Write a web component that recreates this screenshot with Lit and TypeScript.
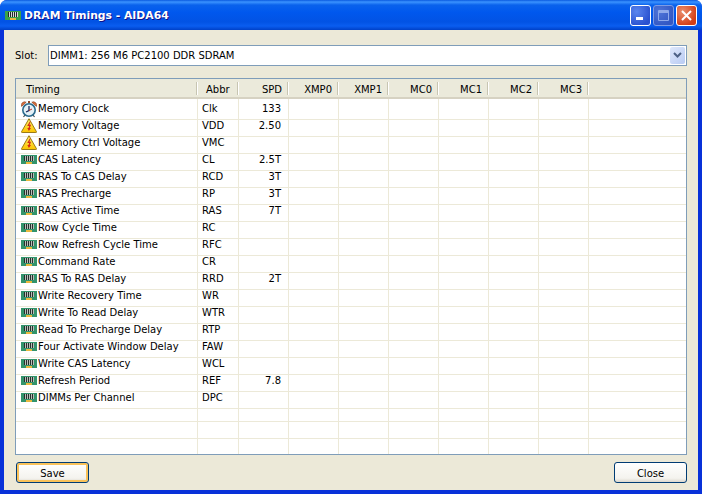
import { LitElement, html, css, svg } from 'lit';
import { customElement } from 'lit/decorators.js';

const ROWS: [string, string, string, string][] = [
    ['clock', 'Memory Clock', 'Clk', '133'],
    ['warn', 'Memory Voltage', 'VDD', '2.50'],
    ['warn', 'Memory Ctrl Voltage', 'VMC', ''],
    ['ram', 'CAS Latency', 'CL', '2.5T'],
    ['ram', 'RAS To CAS Delay', 'RCD', '3T'],
    ['ram', 'RAS Precharge', 'RP', '3T'],
    ['ram', 'RAS Active Time', 'RAS', '7T'],
    ['ram', 'Row Cycle Time', 'RC', ''],
    ['ram', 'Row Refresh Cycle Time', 'RFC', ''],
    ['ram', 'Command Rate', 'CR', ''],
    ['ram', 'RAS To RAS Delay', 'RRD', '2T'],
    ['ram', 'Write Recovery Time', 'WR', ''],
    ['ram', 'Write To Read Delay', 'WTR', ''],
    ['ram', 'Read To Precharge Delay', 'RTP', ''],
    ['ram', 'Four Activate Window Delay', 'FAW', ''],
    ['ram', 'Write CAS Latency', 'WCL', ''],
    ['ram', 'Refresh Period', 'REF', '7.8'],
    ['ram', 'DIMMs Per Channel', 'DPC', ''],
    ['', '', '', ''],
    ['', '', '', ''],
    ['', '', '', ''],
];

const XMP = ['XMP0', 'XMP1', 'MC0', 'MC1', 'MC2', 'MC3'];

const ramIcon = svg`<svg width="16" height="9" viewBox="0 0 16 9" shape-rendering="crispEdges">
    <rect width="16" height="9" fill="#33946c"/>
    <path d="M3 1h1v5H3zM5 1h1v5H5zM7 1h1v5H7zM9 1h1v5H9zM11 1h1v5h-1z" fill="#26302c"/>
    <path d="M4 1h1v5H4zM6 1h1v5H6zM8 1h1v5H8zM10 1h1v5h-1zM12 1h1v5h-1z" fill="#b8bdb8"/>
    <path d="M5 7h6v2H5z" fill="#e9b93e"/>
</svg>`;

const titleRamIcon = svg`<svg width="16" height="9" viewBox="0 0 16 9" shape-rendering="crispEdges">
    <rect width="16" height="9" fill="#3aa24a"/>
    <path d="M3 1h1v5H3zM5 1h1v5H5zM7 1h1v5H7zM9 1h1v5H9zM11 1h1v5h-1z" fill="#20282a"/>
    <path d="M4 1h1v5H4zM6 1h1v5H6zM8 1h1v5H8zM10 1h1v5h-1zM12 1h1v5h-1z" fill="#d8dcd8"/>
    <path d="M5 7h6v2H5z" fill="#e9b93e"/>
</svg>`;

const warnIcon = svg`<svg width="16" height="15" viewBox="0 0 16 15">
    <defs><linearGradient id="wg" x1="0" y1="0" x2="0" y2="1"><stop offset="0" stop-color="#fff06a"/><stop offset="1" stop-color="#fbc400"/></linearGradient></defs>
    <path d="M8 .7 15.400 13.600a.6.6 0 0 1-.5.9H1.100a.6.6 0 0 1-.5-.9Z" fill="url(#wg)" stroke="#9c7a14" stroke-linejoin="round"/>
    <path d="M8.800 3.500 6.200 8h2l-.7 2H6.300l1.600 3 2.100-3H8.800l1.300-3.200H8.400l1.200-3.300z" fill="#d5281a"/>
</svg>`;

const clockIcon = svg`<svg width="16" height="18" viewBox="0 0 16 18">
    <path d="M7 1h2v2H7z" fill="#8a4a2a"/>
    <path d="M.6 6.400a3.300 3.300 0 0 1 4.600-4.200zM15.400 6.400a3.300 3.300 0 0 0-4.600-4.200z" fill="#e0703c" stroke="#7a3a20" stroke-width=".6"/>
    <path d="M2.500 17l1.500-2M13.500 17l-1.500-2" stroke="#4a4a4a" stroke-width="1.200"/>
    <circle cx="8" cy="10" r="6.200" fill="#e4f0f6" stroke="#2a6a8c" stroke-width="1.600"/>
    <path d="M8 6v4.500L5 12" fill="none" stroke="#1a2a5c" stroke-width="1.300"/>
    <path d="M8 10.500l3-1.500" fill="none" stroke="#c8301c"/>
</svg>`;

const icons: Record<string, unknown> = { ram: ramIcon, warn: warnIcon, clock: clockIcon };

@customElement('app-root')
export class AppRoot extends LitElement {
    static styles = css`
        :host {
            display: block;
            width: 702px;
            height: 494px;
            font-family: Tahoma, 'DejaVu Sans', sans-serif;
            font-size: 10px;
            color: #000;
            background: #fff;
        }

        .window {
            height: 100%;
            box-sizing: border-box;
            display: flex;
            flex-direction: column;
            background: #0831d9;
            border-radius: 7px 7px 0 0;
            overflow: hidden;
        }

        .titlebar {
            height: 30px;
            flex: none;
            display: flex;
            align-items: center;
            padding: 0 5px 0 5px;
            background: linear-gradient(180deg, #0a5ae0 0, #3b93ff 2px, #0a62ec 5px, #0058ee 12px, #0253e4 22px, #0a5df0 26px, #0041c8 30px);
        }

        .title-text {
            margin-left: 3px;
            color: #fff;
            font-weight: bold;
            font-size: 10.8px;
            text-shadow: 1px 1px 0 #0f1089;
            flex: 1;
        }

        .cap-btn {
            width: 21px;
            height: 21px;
            box-sizing: border-box;
            margin-left: 2px;
            border: 1px solid #fff;
            border-radius: 3px;
            display: flex;
            align-items: center;
            justify-content: center;
            background: radial-gradient(circle at 30% 30%, #5a86ee, #2a52d0 75%);
        }

        .cap-btn.disabled {
            border-color: #7d9be4;
            background: radial-gradient(circle at 30% 30%, #4f74d8, #3358c4 75%);
        }

        .cap-btn.close {
            background: radial-gradient(circle at 30% 30%, #eb8f6e, #d23e16 75%);
        }

        .client {
            flex: 1;
            min-height: 0;
            margin: 0 4px 4px;
            padding: 15px 11px 7px;
            background: #ece9d8;
            display: flex;
            flex-direction: column;
        }

        .slot {
            display: flex;
            align-items: center;
            height: 21px;
            flex: none;
            line-height: 23px;
        }

        .slot label {
            width: 33px;
        }

        .combo {
            flex: 1;
            height: 21px;
            box-sizing: border-box;
            border: 1px solid #7f9db9;
            background: #fff;
            display: flex;
            align-items: center;
            justify-content: space-between;
            padding: 0 1px 0 1px;
        }

        .combo-btn {
            width: 15px;
            height: 17px;
            border-radius: 2px;
            background: linear-gradient(135deg, #dfe8fb, #b9cbf3);
            display: flex;
            align-items: center;
            justify-content: center;
        }

        .list {
            flex: 1;
            min-height: 0;
            margin-top: 12px;
            border: 1px solid #7f9db9;
            background: #fff;
            overflow: hidden;
        }

        .row {
            display: grid;
            grid-template-columns: 182px 41px repeat(7, 50px) 1fr;
            height: 17px;
        }

        .row > div {
            box-sizing: border-box;
            border-right: 1px solid #ece9d8;
            border-bottom: 1px solid #ece9d8;
            line-height: 16px;
            padding: 2px 4px 0;
            white-space: nowrap;
            overflow: hidden;
        }

        .row > div.last {
            border-right: none;
        }

        .row .num {
            text-align: right;
            padding-right: 7px;
        }

        .row .name {
            display: flex;
            align-items: center;
            padding: 0 0 0 5px;
            overflow: visible;
            line-height: 20px;
        }

        .row .name .ico {
            width: 16px;
            height: 16px;
            margin-right: 1px;
            margin-top: -1px;
            display: flex;
            align-items: center;
            flex: none;
        }

        .head {
            height: 20px;
            display: grid;
            grid-template-columns: 182px 41px repeat(7, 50px) 1fr;
            background: #ebeadb;
            border-bottom: 2px solid #d6d2c2;
            box-sizing: border-box;
        }

        .head > div {
            position: relative;
            line-height: 22px;
            padding: 0 8px;
        }

        .head > div.first {
            padding-left: 10px;
        }

        .head > div.sep::after {
            content: '';
            position: absolute;
            right: 1px;
            top: 3px;
            height: 13px;
            border-right: 1px solid #c7c5b2;
            box-shadow: 1px 0 0 #fff;
        }

        .head .num {
            text-align: right;
            padding-right: 7px;
        }

        .footer {
            flex: none;
            display: flex;
            justify-content: space-between;
            margin-top: 7px;
            padding-left: 1px;
        }

        .btn {
            width: 73px;
            height: 21px;
            box-sizing: border-box;
            border: 1px solid #003c74;
            border-radius: 3px;
            background: linear-gradient(180deg, #fff, #f4f3ee 80%, #dcd8ce);
            font: inherit;
            color: #000;
            padding: 1px 0 0;
        }

        .btn.default {
            box-shadow: inset 0 0 0 2px #f9c25a;
        }
    `;

    render() {
        return html`
            <div class="window">
                <div class="titlebar">
                    ${titleRamIcon}
                    <span class="title-text">DRAM Timings - AIDA64</span>
                    <div class="cap-btn">
                        <svg width="11" height="11" viewBox="0 0 11 11"><path d="M1 7h7v3H1z" fill="#fff"/></svg>
                    </div>
                    <div class="cap-btn disabled">
                        <svg width="13" height="13" viewBox="0 0 13 13"><path d="M1.500 1.500h10v10h-10z" fill="none" stroke="#8fa9ea" stroke-width="1"/><path d="M1 2h11v2H1z" fill="#8fa9ea"/></svg>
                    </div>
                    <div class="cap-btn close">
                        <svg width="13" height="13" viewBox="0 0 13 13"><path d="M2 2l9 9M11 2l-9 9" fill="none" stroke="#fff" stroke-width="2"/></svg>
                    </div>
                </div>
                <div class="client">
                    <div class="slot">
                        <label>Slot:</label>
                        <div class="combo">
                            <span>DIMM1: 256 M6 PC2100 DDR SDRAM</span>
                            <div class="combo-btn">
                                <svg width="9" height="7" viewBox="0 0 9 7"><path d="M1 1l3.500 3.500L8 1" fill="none" stroke="#4d6185" stroke-width="2"/></svg>
                            </div>
                        </div>
                    </div>
                    <div class="list">
                        <div class="head">
                            <div class="sep first">Timing</div>
                            <div class="sep">Abbr</div>
                            <div class="sep num">SPD</div>
                            ${XMP.map((x) => html`<div class="sep num">${x}</div>`)}
                            <div></div>
                        </div>
                        ${ROWS.map(([icon, name, abbr, spd]) => html`
                            <div class="row">
                                <div class="name">
                                    <span class="ico">${icons[icon]}</span>${name}
                                </div>
                                <div>${abbr}</div>
                                <div class="num">${spd}</div>
                                ${XMP.map(() => html`<div></div>`)}
                                <div class="last"></div>
                            </div>
                        `)}
                    </div>
                    <div class="footer">
                        <button class="btn default">Save</button>
                        <button class="btn">Close</button>
                    </div>
                </div>
            </div>
        `;
    }
}
